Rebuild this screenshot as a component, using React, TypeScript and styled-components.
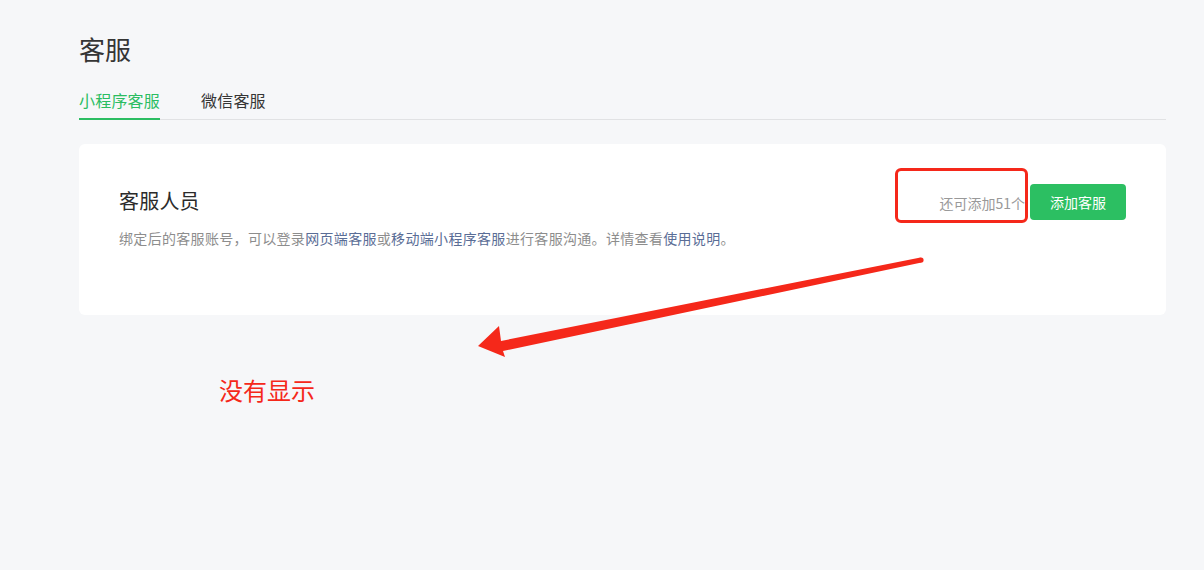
import React from 'react';
import styled, { createGlobalStyle } from 'styled-components';

const GlobalStyle = createGlobalStyle`
  html, body {
    margin: 0;
    padding: 0;
    background: #f6f7f9;
  }
  body {
    font-family: "Noto Sans CJK SC", "Noto Sans", sans-serif;
    color: #353535;
  }
`;

const Page = styled.div`
  position: relative;
  width: 1204px;
  height: 570px;
  box-sizing: border-box;
  padding: 30px 38px 0 79px;
`;

const Title = styled.h1`
  margin: 0;
  font-size: 26px;
  font-weight: 400;
  line-height: 38px;
  color: #353535;
`;

const TabBar = styled.div`
  display: flex;
  gap: 41px;
  margin-top: 20px;
  border-bottom: 1px solid #e1e2e4;
`;

const Tab = styled.div<{ $active?: boolean }>`
  font-size: 16px;
  line-height: 24px;
  letter-spacing: 0.2px;
  padding-bottom: 6px;
  margin-bottom: -1px;
  color: ${(p) => (p.$active ? '#2bbd62' : '#353535')};
  border-bottom: 2px solid ${(p) => (p.$active ? '#2bbd62' : 'transparent')};
  cursor: pointer;
`;

const Card = styled.section`
  position: relative;
  margin-top: 24px;
  background: #fff;
  border-radius: 6px;
  padding: 40px 40px 66px;
`;

const HeaderRow = styled.div`
  display: flex;
  align-items: center;
  height: 36px;
`;

const Heading = styled.h2`
  flex: 1;
  margin: 0;
  font-size: 20px;
  font-weight: 400;
  letter-spacing: 0.2px;
  color: #2b2b2b;
  line-height: 28px;
  padding-bottom: 2px;
`;

const Quota = styled.span`
  font-size: 14px;
  color: #999;
  margin-right: 5px;
  padding-top: 1px;
`;

const PrimaryButton = styled.button`
  width: 96px;
  height: 36px;
  border: none;
  border-radius: 4px;
  background: #2cbf62;
  color: #fff;
  font-family: inherit;
  font-size: 14px;
  cursor: pointer;
`;

const Desc = styled.p`
  margin: 7px 0 0;
  font-size: 14px;
  line-height: 22px;
  letter-spacing: 0.32px;
  color: #8d8d8d;
`;

const Link = styled.a`
  color: #5a6d96;
  text-decoration: none;
`;

const Highlight = styled.div`
  position: absolute;
  left: 816px;
  top: 24px;
  width: 133px;
  height: 55px;
  box-sizing: border-box;
  border: 3px solid #f5281a;
  border-radius: 6px;
  pointer-events: none;
`;

const Arrow = styled.svg`
  position: absolute;
  left: 470px;
  top: 250px;
  width: 460px;
  height: 110px;
  pointer-events: none;
`;

const Note = styled.div`
  position: absolute;
  left: 219px;
  top: 373px;
  font-size: 24px;
  line-height: 34px;
  color: #f5281a;
`;

const App = () => (
  <>
    <GlobalStyle />
    <Page>
      <Title>客服</Title>
      <TabBar>
        <Tab $active>小程序客服</Tab>
        <Tab>微信客服</Tab>
      </TabBar>
      <Card>
        <HeaderRow>
          <Heading>客服人员</Heading>
          <Quota>还可添加51个</Quota>
          <PrimaryButton>添加客服</PrimaryButton>
        </HeaderRow>
        <Desc>
          绑定后的客服账号，可以登录<Link href="#">网页端客服</Link>或
          <Link href="#">移动端小程序客服</Link>进行客服沟通。详情查看
          <Link href="#">使用说明</Link>。
        </Desc>
        <Highlight />
      </Card>
      <Arrow viewBox="0 0 460 110">
        <circle cx="451" cy="10" r="2.6" fill="#f5281a" />
        <polygon
          points="450.5,7.4 451.5,12.6 33,101 35,107 8,96 29,76 31,91"
          fill="#f5281a"
        />
      </Arrow>
      <Note>没有显示</Note>
    </Page>
  </>
);

export default App;
